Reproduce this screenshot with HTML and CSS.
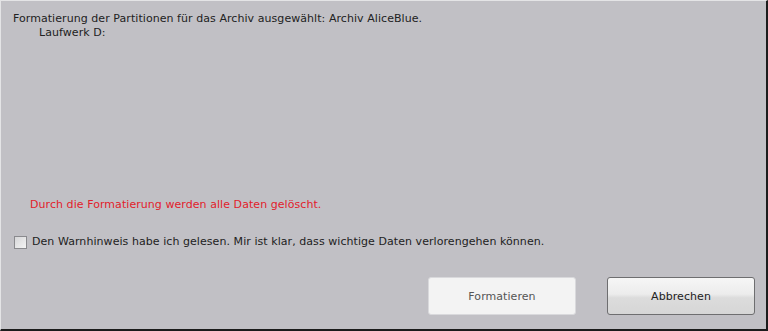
FILE: index.html
```html
<!DOCTYPE html>
<html lang="de">
<head>
    <meta charset="UTF-8">
    <title>Formatierung</title>
    <link rel="stylesheet" href="styles.css">
</head>
<body>
    <div class="dialog">
        <div class="message">
            <p class="intro">Formatierung der Partitionen für das Archiv ausgewählt: Archiv AliceBlue.</p>
            <p class="drive">Laufwerk D:</p>
        </div>
        <p class="warning">Durch die Formatierung werden alle Daten gelöscht.</p>
        <label class="confirm">
            <input type="checkbox" class="check">
            <span>Den Warnhinweis habe ich gelesen. Mir ist klar, dass wichtige Daten verlorengehen können.</span>
        </label>
        <div class="buttons">
            <button class="btn btn-disabled" disabled>Formatieren</button>
            <button class="btn">Abbrechen</button>
        </div>
    </div>
</body>
</html>
```

FILE: styles.css
```css
html, body {
    margin: 0;
    padding: 0;
}

body {
    font-family: 'DejaVu Sans', Verdana, sans-serif;
    font-size: 11px;
    letter-spacing: 0.06px;
    color: #222;
    background: #c1c0c5;
}

.dialog {
    width: 768px;
    height: 331px;
    box-sizing: border-box;
    background: #c1c0c5;
    border-top: 1px solid #e4e4e6;
    border-left: 1px solid #e4e4e6;
    border-right: 2px solid #1c1c1c;
    border-bottom: 2px solid #1c1c1c;
    display: flex;
    flex-direction: column;
    padding: 11px 11px 0 12px;
}

p {
    margin: 0;
}

.message {
    height: 186px;
}

.intro {
    line-height: 14px;
}

.drive {
    line-height: 14px;
    padding-left: 26px;
}

.warning {
    color: #e2202b;
    padding-left: 17px;
    line-height: 14px;
}

.confirm {
    display: flex;
    align-items: center;
    margin-top: 23px;
    line-height: 14px;
}

.check {
    appearance: none;
    width: 13px;
    height: 13px;
    margin: 0 5px 0 1px;
    border: 1px solid #8a8a8e;
    background: linear-gradient(135deg, #d6d6d8, #f4f4f4);
    box-sizing: border-box;
}

.buttons {
    display: flex;
    justify-content: flex-end;
    gap: 31px;
    margin-top: 28px;
}

.btn {
    width: 148px;
    height: 38px;
    font-family: inherit;
    font-size: 11px;
    letter-spacing: 0.06px;
    color: #222;
    border: 1px solid #6e6e70;
    border-radius: 3px;
    background: linear-gradient(#f6f6f6, #ececec 45%, #dcdcdc 55%, #d6d6d6);
}

.btn-disabled {
    color: #555;
    border-color: #d9d9dc;
    background: #f3f3f3;
}
```
